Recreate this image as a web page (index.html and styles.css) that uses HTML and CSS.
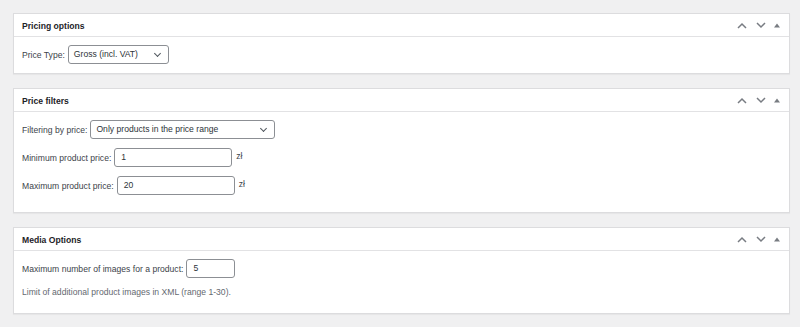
FILE: index.html
```html
<!DOCTYPE html>
<html>
<head>
  <meta charset="utf-8">
  <title>Feed settings</title>
  <link rel="stylesheet" href="styles.css">
</head>
<body>
  <div class="postbox">
    <div class="postbox-header">
      <h2>Pricing options</h2>
      <div class="handle-actions">
        <span class="handle up"><svg width="10" height="7" viewBox="0 0 10 7"><path d="M1 6 L5 2 L9 6"/></svg></span>
        <span class="handle down"><svg width="10" height="7" viewBox="0 0 10 7"><path d="M1 1 L5 5 L9 1"/></svg></span>
        <span class="handle toggle"><svg width="6" height="5" viewBox="0 0 6 5"><polygon points="0,4.5 3,0.5 6,4.5"/></svg></span>
      </div>
    </div>
    <div class="inside">
      <div class="field-row">
        <label>Price Type:</label>
        <div class="select w-price-type">Gross (incl. VAT)</div>
      </div>
    </div>
  </div>

  <div class="postbox">
    <div class="postbox-header">
      <h2>Price filters</h2>
      <div class="handle-actions">
        <span class="handle up"><svg width="10" height="7" viewBox="0 0 10 7"><path d="M1 6 L5 2 L9 6"/></svg></span>
        <span class="handle down"><svg width="10" height="7" viewBox="0 0 10 7"><path d="M1 1 L5 5 L9 1"/></svg></span>
        <span class="handle toggle"><svg width="6" height="5" viewBox="0 0 6 5"><polygon points="0,4.5 3,0.5 6,4.5"/></svg></span>
      </div>
    </div>
    <div class="inside filters">
      <div class="field-row">
        <label>Filtering by price:</label>
        <div class="select w-filter">Only products in the price range</div>
      </div>
      <div class="field-row">
        <label>Minimum product price:</label>
        <div class="input w-price">1</div>
        <span class="unit">zł</span>
      </div>
      <div class="field-row">
        <label>Maximum product price:</label>
        <div class="input w-price">20</div>
        <span class="unit">zł</span>
      </div>
    </div>
  </div>

  <div class="postbox">
    <div class="postbox-header">
      <h2>Media Options</h2>
      <div class="handle-actions">
        <span class="handle up"><svg width="10" height="7" viewBox="0 0 10 7"><path d="M1 6 L5 2 L9 6"/></svg></span>
        <span class="handle down"><svg width="10" height="7" viewBox="0 0 10 7"><path d="M1 1 L5 5 L9 1"/></svg></span>
        <span class="handle toggle"><svg width="6" height="5" viewBox="0 0 6 5"><polygon points="0,4.5 3,0.5 6,4.5"/></svg></span>
      </div>
    </div>
    <div class="inside media">
      <div class="field-row">
        <label>Maximum number of images for a product:</label>
        <div class="input w-images">5</div>
      </div>
      <p class="description">Limit of additional product images in XML (range 1-30).</p>
    </div>
  </div>
</body>
</html>
```

FILE: styles.css
```css
body {
  font-family: "Liberation Sans", Arial, sans-serif;
  font-size: 8.6px;
  color: #3c434a;
  background-color: #f0f0f1;
  margin: 0;
  padding: 13px 10px 0 13px;
}

.postbox {
  background-color: #fff;
  border: 1px solid #dcdcde;
  margin-bottom: 14px;
  box-shadow: 0 1px 1px rgba(0, 0, 0, .04);
}

.postbox-header {
  display: flex;
  justify-content: space-between;
  align-items: center;
  height: 22px;
  border-bottom: 1px solid #e2e2e4;
}

.postbox-header h2 {
  font-size: 8.6px;
  font-weight: bold;
  color: #1d2327;
  margin: 0;
  padding: 1px 8px 0;
}

.handle-actions {
  display: flex;
  align-items: center;
  padding-right: 5px;
}

.handle {
  display: flex;
  align-items: center;
  justify-content: center;
  width: 19px;
  height: 19px;
}

.handle svg path {
  fill: none;
  stroke: #787c82;
  stroke-width: 1.5;
}

.handle svg polygon {
  fill: #787c82;
}

.handle.toggle {
  width: 14px;
}

.inside {
  padding: 8px 8px 9px;
}

.inside.filters {
  padding-bottom: 17px;
}

.inside.media {
  padding-bottom: 16px;
}

.field-row {
  display: flex;
  align-items: center;
  margin-bottom: 9px;
}

.field-row:last-child {
  margin-bottom: 0;
}

.field-row label {
  margin-right: 3px;
}

.select,
.input {
  box-sizing: border-box;
  height: 19px;
  border: 1px solid #8c8f94;
  border-radius: 3px;
  color: #2c3338;
  font-size: 8.6px;
  line-height: 17px;
  padding: 0 5px;
}

.select {
  position: relative;
  padding-right: 20px;
}

.select:after {
  content: "";
  position: absolute;
  right: 8px;
  top: 5px;
  width: 4px;
  height: 4px;
  border-right: 1.4px solid #50575e;
  border-bottom: 1.4px solid #50575e;
  transform: rotate(45deg);
}

.input {
  padding: 0 6px;
}

.w-price-type { width: 101px; }
.w-filter { width: 185px; }
.w-price { width: 118px; }
.w-images { width: 49px; }

.unit {
  margin-left: 4px;
  align-self: flex-start;
  margin-top: 3px;
  color: #3c434a;
}

.description {
  color: #646970;
  margin: 9px 0 0;
}
```
